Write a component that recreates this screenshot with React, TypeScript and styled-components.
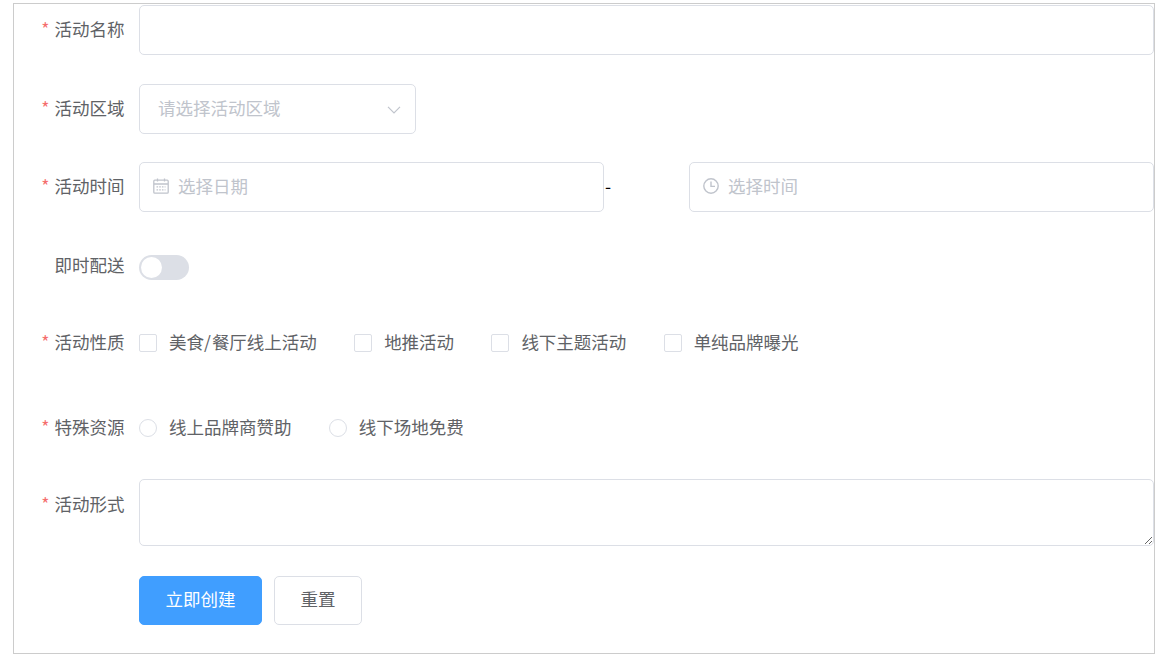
import React from 'react';
import styled, { createGlobalStyle } from 'styled-components';

const GlobalStyle = createGlobalStyle`
  html, body {
    margin: 0;
    padding: 0;
    background: #fff;
  }
  body {
    font-family: "Noto Sans CJK SC", "Liberation Sans", sans-serif;
    font-size: 17.5px;
  }
`;

const Page = styled.div`
  padding: 3px 0 0 13px;
`;

const Form = styled.form`
  box-sizing: border-box;
  width: 1142px;
  height: 651px;
  padding-top: 1px;
  border: 1px solid #ccc;
`;

const Row = styled.div<{ $gap: number }>`
  display: flex;
  margin-bottom: ${(p) => p.$gap}px;
`;

const Label = styled.label<{ $required?: boolean; $lineHeight?: number }>`
  box-sizing: border-box;
  flex: 0 0 125px;
  height: 50px;
  padding-right: 14.5px;
  line-height: ${(p) => p.$lineHeight ?? 48}px;
  text-align: right;
  color: #606266;
  white-space: nowrap;

  &::before {
    content: ${(p) => (p.$required ? '"*"' : 'none')};
    margin-right: 5px;
    color: #f56c6c;
  }
`;

const Control = styled.div`
  flex: 1;
  min-width: 0;
`;

const Field = styled.div<{ $width?: number }>`
  position: relative;
  width: ${(p) => (p.$width ? `${p.$width}px` : '100%')};
`;

const Input = styled.input<{ $padLeft?: number }>`
  display: block;
  box-sizing: border-box;
  width: 100%;
  height: 50px;
  padding: 0 18px 4px ${(p) => p.$padLeft ?? 18}px;
  border: 1px solid #dcdfe6;
  border-radius: 5px;
  outline: none;
  background: #fff;
  font: inherit;
  color: #606266;

  &::placeholder {
    color: #c0c4cc;
    opacity: 1;
  }
`;

const FieldIcon = styled.span<{ $side: 'left' | 'right' }>`
  position: absolute;
  top: 16px;
  ${(p) => (p.$side === 'left' ? 'left: 14px;' : 'right: 14px;')}
  display: flex;
  color: #c0c4cc;
`;

const TimeGrid = styled.div`
  display: grid;
  grid-template-columns: 465px 85px 465px;
`;

const Dash = styled.span`
  line-height: 48px;
  padding-left: 1px;
  color: #000;
`;

const Toggle = styled.span`
  position: relative;
  display: block;
  width: 50px;
  height: 25px;
  margin-top: 15px;
  border-radius: 13px;
  background: #dcdfe6;

  &::after {
    content: '';
    position: absolute;
    top: 2px;
    left: 2px;
    width: 21px;
    height: 21px;
    border-radius: 50%;
    background: #fff;
  }
`;

const Options = styled.div`
  display: flex;
  align-items: center;
  gap: 37.25px;
  height: 50px;
`;

const Option = styled.label`
  display: flex;
  align-items: center;
  gap: 12px;
  color: #606266;
  white-space: nowrap;
`;

const OptionText = styled.span`
  padding-bottom: 2px;
  line-height: 24px;
`;

const Slash = styled.span`
  letter-spacing: 1px;
`;

const Mark = styled.span<{ $round?: boolean }>`
  box-sizing: border-box;
  display: block;
  width: 18px;
  height: 18px;
  border: 1px solid #dcdfe6;
  border-radius: ${(p) => (p.$round ? '50%' : '2px')};
  background: #fff;
`;

const TextArea = styled.textarea`
  display: block;
  box-sizing: border-box;
  width: 100%;
  height: 67px;
  padding: 6px 19px;
  border: 1px solid #dcdfe6;
  border-radius: 5px;
  outline: none;
  font: inherit;
  color: #606266;
`;

const Actions = styled.div`
  display: flex;
  gap: 12px;
`;

const Button = styled.button<{ $primary?: boolean }>`
  box-sizing: border-box;
  height: 49px;
  padding: 0 25.5px 4px;
  border: 1px solid ${(p) => (p.$primary ? '#409eff' : '#dcdfe6')};
  border-radius: 5px;
  background: ${(p) => (p.$primary ? '#409eff' : '#fff')};
  color: ${(p) => (p.$primary ? '#fff' : '#606266')};
  font: inherit;
  line-height: 1;
`;

const ChevronIcon = () => (
  <svg width="16" height="16" viewBox="0 0 16 16" fill="none" stroke="currentColor" strokeWidth="1.2">
    <path d="M2 6.8 8 12.8 14 6.8" />
  </svg>
);

const CalendarIcon = () => (
  <svg width="16" height="16" viewBox="0 0 16 16" fill="none" stroke="currentColor" strokeWidth="1.3">
    <rect x="0.8" y="2.2" width="14.4" height="13" rx="1" />
    <path d="M1 6h14M4.5 0.4v3M11.5 0.4v3" />
    <path d="M3.5 8.9h9M3.5 11.8h9" strokeDasharray="1.6 1.1" />
  </svg>
);

const ClockIcon = () => (
  <svg width="16" height="16" viewBox="0 0 16 16" fill="none" stroke="currentColor" strokeWidth="1.4">
    <circle cx="8" cy="8" r="7.2" />
    <path d="M8 3.6V8.4H12" />
  </svg>
);

const natures: React.ReactNode[] = [
  <>美食<Slash>/</Slash>餐厅线上活动</>,
  '地推活动',
  '线下主题活动',
  '单纯品牌曝光',
];
const resources = ['线上品牌商赞助', '线下场地免费'];

const App: React.FC = () => {
  return (
    <Page>
      <GlobalStyle />
      <Form>
        <Row $gap={29}>
          <Label $required>活动名称</Label>
          <Control>
            <Input />
          </Control>
        </Row>

        <Row $gap={28}>
          <Label $required>活动区域</Label>
          <Control>
            <Field $width={277}>
              <Input readOnly placeholder="请选择活动区域" />
              <FieldIcon $side="right">
                <ChevronIcon />
              </FieldIcon>
            </Field>
          </Control>
        </Row>

        <Row $gap={28}>
          <Label $required>活动时间</Label>
          <Control>
            <TimeGrid>
              <Field>
                <Input $padLeft={38} placeholder="选择日期" />
                <FieldIcon $side="left">
                  <CalendarIcon />
                </FieldIcon>
              </Field>
              <Dash>-</Dash>
              <Field>
                <Input $padLeft={38} placeholder="选择时间" />
                <FieldIcon $side="left">
                  <ClockIcon />
                </FieldIcon>
              </Field>
            </TimeGrid>
          </Control>
        </Row>

        <Row $gap={28}>
          <Label $lineHeight={50}>即时配送</Label>
          <Control>
            <Toggle />
          </Control>
        </Row>

        <Row $gap={35}>
          <Label $required>活动性质</Label>
          <Options>
            {natures.map((text, i) => (
              <Option key={i}>
                <Mark />
                <OptionText>{text}</OptionText>
              </Option>
            ))}
          </Options>
        </Row>

        <Row $gap={26}>
          <Label $required>特殊资源</Label>
          <Options>
            {resources.map((text) => (
              <Option key={text}>
                <Mark $round />
                <OptionText>{text}</OptionText>
              </Option>
            ))}
          </Options>
        </Row>

        <Row $gap={30}>
          <Label $required $lineHeight={50}>活动形式</Label>
          <Control>
            <TextArea />
          </Control>
        </Row>

        <Row $gap={0}>
          <Label />
          <Actions>
            <Button type="button" $primary>立即创建</Button>
            <Button type="button">重置</Button>
          </Actions>
        </Row>
      </Form>
    </Page>
  );
};

export default App;
